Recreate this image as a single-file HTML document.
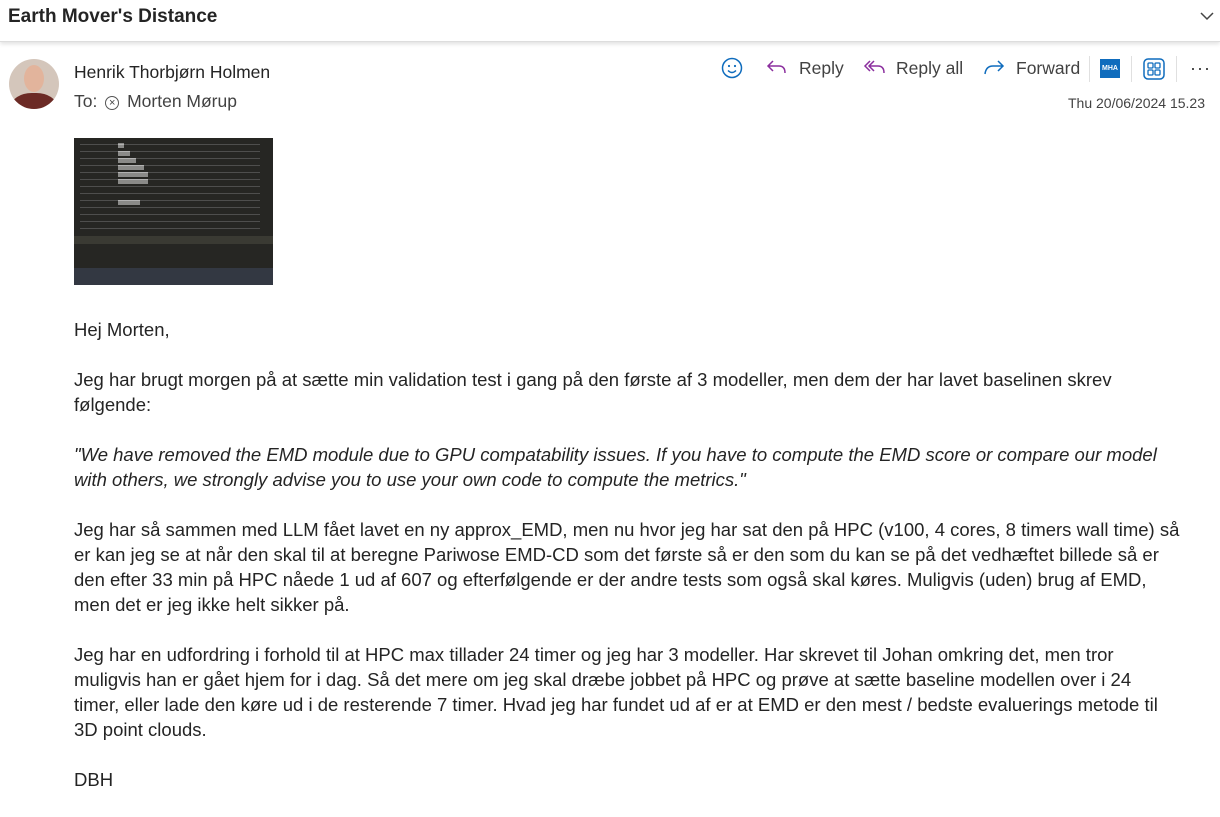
<!DOCTYPE html>
<html><head><meta charset="utf-8"><style>
body{margin:0;width:1220px;height:787px;overflow:hidden;background:#fff;font-family:"Liberation Sans",sans-serif;color:#242424;position:relative}
.hdr{position:absolute;left:0;top:0;width:1220px;height:41px;border-bottom:1px solid #ddd;box-shadow:0 2px 4px rgba(0,0,0,.12)}
.title{position:absolute;left:8px;top:6px;font-size:19px;font-weight:bold;color:#242424}
.a{position:absolute}
.body{position:absolute;left:74px;top:317px;font-size:18.5px;line-height:25px;white-space:nowrap;color:#242424}
.body p{margin:0 0 25px 0}
.act{font-size:17.5px;color:#424242;top:58px}
</style></head><body>
<div class="hdr"><div class="title">Earth Mover's Distance</div>
<svg class="a" style="left:1199px;top:10px" width="16" height="12" viewBox="0 0 16 12"><path d="M2 3l6 6 6-6" stroke="#444" stroke-width="1.5" fill="none"/></svg></div>
<div class="a" style="left:9px;top:59px;width:50px;height:50px;border-radius:50%;background:#d4c6bb;overflow:hidden">
<div style="position:absolute;left:15px;top:6px;width:20px;height:27px;border-radius:50%;background:#e2b49c"></div>
<div style="position:absolute;left:2px;top:34px;width:46px;height:30px;border-radius:45% 45% 0 0;background:#6b2a25"></div></div>
<div class="a" style="left:74px;top:62px;font-size:17.5px;color:#242424">Henrik Thorbjørn Holmen</div>
<div class="a" style="left:74px;top:91px;font-size:17.5px;color:#424242">To: <span style="display:inline-block;width:12px;height:12px;border:1.5px solid #555;border-radius:50%;font-size:11px;line-height:12px;text-align:center;vertical-align:1px;margin:0 3px">×</span> Morten Mørup</div>
<svg class="a" style="left:721px;top:57px" width="22" height="22" viewBox="0 0 22 22"><circle cx="11" cy="11" r="9.5" fill="none" stroke="#0f6cbd" stroke-width="1.5"/><circle cx="8" cy="9" r="1.1" fill="#0f6cbd"/><circle cx="14" cy="9" r="1.1" fill="#0f6cbd"/><path d="M7 13.5q4 4 8 0" stroke="#0f6cbd" stroke-width="1.4" fill="none"/></svg>
<svg class="a" style="left:765px;top:58px" width="24" height="20" viewBox="0 0 24 20"><path d="M8 3L3 8l5 5M3 8h11q6 0 6 7" stroke="#8b2f9e" stroke-width="1.5" fill="none"/></svg>
<div class="a act" style="left:799px">Reply</div>
<svg class="a" style="left:862px;top:58px" width="26" height="20" viewBox="0 0 26 20"><path d="M8 3L3 8l5 5M12 3L7 8l5 5M7 8h9q6 0 6 7" stroke="#8b2f9e" stroke-width="1.5" fill="none"/></svg>
<div class="a act" style="left:896px">Reply all</div>
<svg class="a" style="left:982px;top:58px" width="24" height="20" viewBox="0 0 24 20"><path d="M16 3l5 5-5 5M21 8H11q-7 0-8 8" stroke="#0f6cbd" stroke-width="1.5" fill="none"/></svg>
<div class="a act" style="left:1016px">Forward</div>
<div class="a" style="left:1089px;top:56px;width:1px;height:26px;background:#e0e0e0"></div>
<div class="a" style="left:1100px;top:59px;width:20px;height:19px;background:#0f6cbd;color:#fff;font-size:7px;font-weight:bold;line-height:19px;text-align:center">MHA</div>
<div class="a" style="left:1131px;top:56px;width:1px;height:26px;background:#e0e0e0"></div>
<svg class="a" style="left:1143px;top:58px" width="22" height="22" viewBox="0 0 22 22"><rect x="1" y="1" width="20" height="20" rx="4" fill="none" stroke="#0f6cbd" stroke-width="1.5"/><rect x="5" y="5" width="5" height="5" rx="1" fill="none" stroke="#0f6cbd" stroke-width="1.3"/><rect x="12" y="5" width="5" height="5" rx="1" fill="none" stroke="#0f6cbd" stroke-width="1.3"/><rect x="5" y="12" width="5" height="5" rx="1" fill="none" stroke="#0f6cbd" stroke-width="1.3"/><rect x="12" y="12" width="5" height="5" rx="1" fill="none" stroke="#0f6cbd" stroke-width="1.3"/></svg>
<div class="a" style="left:1176px;top:56px;width:1px;height:26px;background:#e0e0e0"></div>
<div class="a" style="left:1190px;top:58px;font-size:18px;color:#333;letter-spacing:1px">···</div>
<div class="a" style="left:1068px;top:95px;font-size:14px;color:#424242">Thu 20/06/2024 15.23</div>
<div class="a" style="left:74px;top:138px;width:199px;height:147px;background:#262623;overflow:hidden">
<div style="position:absolute;left:0;top:98px;width:199px;height:8px;background:#3a3a33"></div>
<div style="position:absolute;left:0;top:130px;width:199px;height:17px;background:#333842"></div>
<div style="position:absolute;left:44px;top:5px;width:6px;height:5px;background:#eee"></div>
<div style="position:absolute;left:44px;top:13px;width:12px;height:5px;background:#eee"></div>
<div style="position:absolute;left:44px;top:20px;width:18px;height:5px;background:#eee"></div>
<div style="position:absolute;left:44px;top:27px;width:26px;height:5px;background:#eee"></div>
<div style="position:absolute;left:44px;top:34px;width:30px;height:5px;background:#eee"></div>
<div style="position:absolute;left:44px;top:41px;width:30px;height:5px;background:#eee"></div>
<div style="position:absolute;left:44px;top:62px;width:22px;height:5px;background:#eee"></div>
<div style="position:absolute;left:6px;top:4px;width:180px;height:90px;background:repeating-linear-gradient(#262623 0 2px,#777 2px 3px,#262623 3px 7px);opacity:.5"></div>
</div>
<div class="body">
<p>Hej Morten,</p>
<p>Jeg har brugt morgen på at sætte min validation test i gang på den første af 3 modeller, men dem der har lavet baselinen skrev<br>følgende:</p>
<p style="font-style:italic">"We have removed the EMD module due to GPU compatability issues. If you have to compute the EMD score or compare our model<br>with others, we strongly advise you to use your own code to compute the metrics."</p>
<p>Jeg har så sammen med LLM fået lavet en ny approx_EMD, men nu hvor jeg har sat den på HPC (v100, 4 cores, 8 timers wall time) så<br>er kan jeg se at når den skal til at beregne Pariwose EMD-CD som det første så er den som du kan se på det vedhæftet billede så er<br>den efter 33 min på HPC nåede 1 ud af 607 og efterfølgende er der andre tests som også skal køres. Muligvis (uden) brug af EMD,<br>men det er jeg ikke helt sikker på.</p>
<p>Jeg har en udfordring i forhold til at HPC max tillader 24 timer og jeg har 3 modeller. Har skrevet til Johan omkring det, men tror<br>muligvis han er gået hjem for i dag. Så det mere om jeg skal dræbe jobbet på HPC og prøve at sætte baseline modellen over i 24<br>timer, eller lade den køre ud i de resterende 7 timer. Hvad jeg har fundet ud af er at EMD er den mest / bedste evaluerings metode til<br>3D point clouds.</p>
<p>DBH</p>
</div>
</body></html>
